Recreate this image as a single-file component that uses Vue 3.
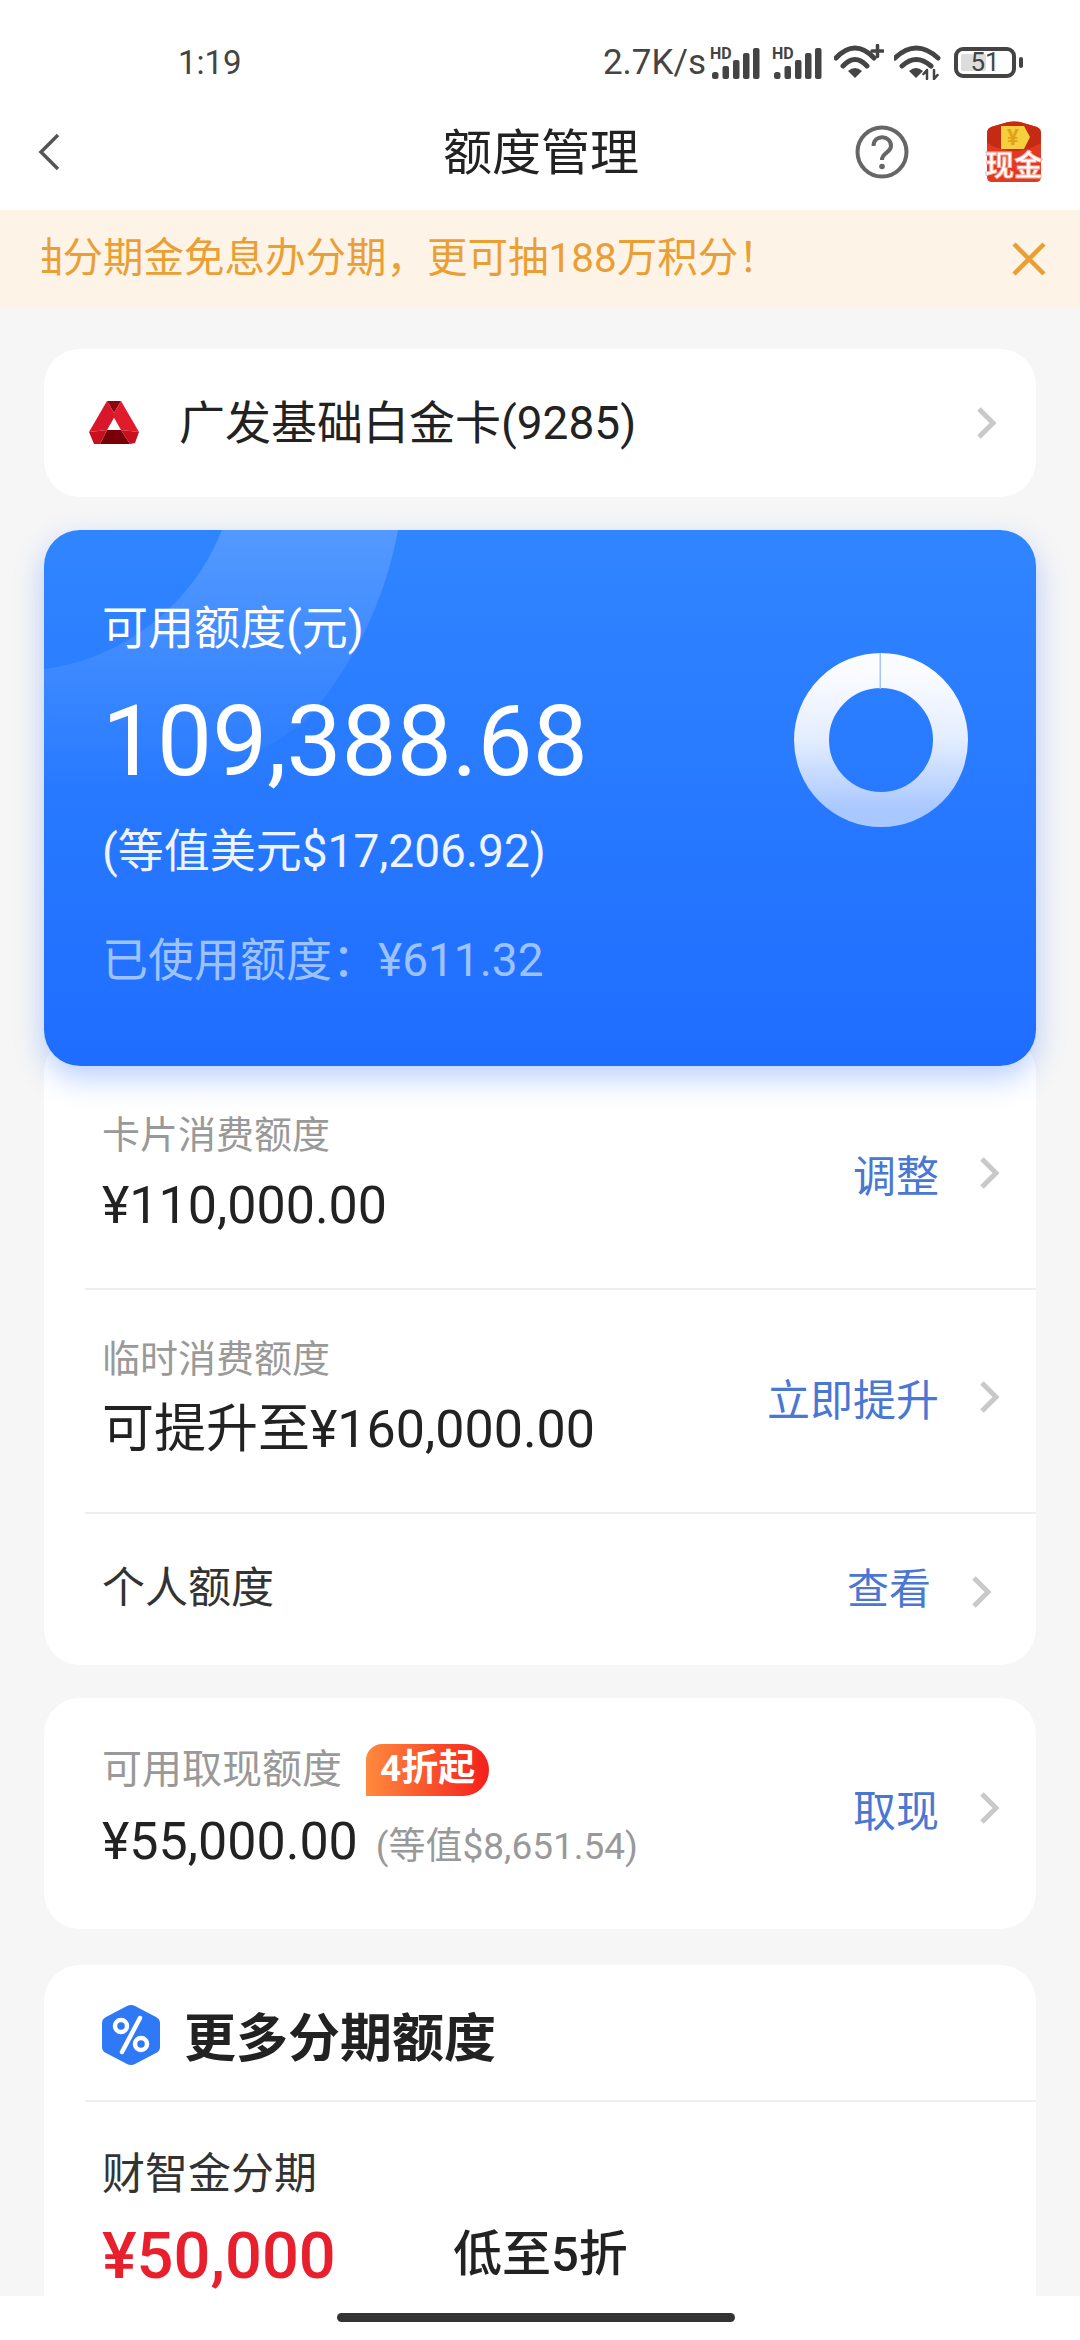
<template>
  <div class="page">
    <div class="status">
      <span class="time">1:19</span>
      <div class="status-right">
        <span class="speed">2.7K/s</span>
        <svg v-for="n in 2" :key="n" class="signal" width="50" height="38" viewBox="0 0 50 38">
          <text x="0" y="16" class="hd">HD</text>
          <rect x="2" y="29" width="6.5" height="7" rx="2.5" />
          <rect x="12.5" y="23" width="6.5" height="13" rx="2" />
          <rect x="23" y="17" width="6.5" height="19" rx="2" />
          <rect x="33" y="10" width="6.5" height="26" rx="2" />
          <rect x="43" y="5" width="6.5" height="31" rx="2" />
        </svg>
        <svg class="wifi" width="50" height="36" viewBox="0 0 50 36">
          <path d="M2 14 Q21 -6 40 14 M9 22 Q21 9 33 22" />
          <path class="wedge" d="M14 27 Q21 21 28 27 L21 34 Z" />
          <path d="M38 7 H49 M43.5 1.5 V12.5" class="plus" />
        </svg>
        <svg class="wifi" width="48" height="36" viewBox="0 0 48 36">
          <path d="M1 14 Q22 -6 44 14 M8 22 Q22 9 37 22" />
          <path class="wedge" d="M15 27 Q22 21 29 27 L22 34 Z" />
          <path class="plus thin" d="M33 35 V26 M29.500 30 L33 26 M40 26 V35 M43.500 31 L40 35" />
        </svg>
        <div class="battery">
          <div class="battery-fill"></div>
          <span>51</span>
        </div>
        <div class="battery-nub"></div>
      </div>
    </div>

    <div class="nav">
      <div class="nav-side">
        <svg class="back" width="22" height="38" viewBox="0 0 22 38">
          <path d="M20 2 L3 19 L20 36" />
        </svg>
      </div>
      <div class="nav-title">额度管理</div>
      <div class="nav-side nav-side-right">
        <svg class="help" width="54" height="54" viewBox="0 0 54 54">
          <circle cx="27" cy="27" r="24.500" />
          <path d="M18.500 21 C18.500 9 36 9.500 36 21 C36 28 27 27.500 27 35" />
          <circle class="dot" cx="27" cy="41.500" r="2.800" />
        </svg>
        <svg class="packet" width="60" height="62" viewBox="0 0 60 62">
          <path d="M3 12 Q3 8 7 6 L24 1 Q30 0 36 1 L53 6 Q57 8 57 12 V56 Q57 61 52 61 H8 Q3 61 3 56 Z" fill="#e23a22" />
          <path d="M3 12 Q3 8 7 6 L24 1 Q30 0 36 1 L53 6 Q57 8 57 12 V22 Q30 38 3 22 Z" fill="#c42a14" />
          <path d="M17 5 H40 L46 16 L40 28 H17 Z" fill="#f6cf3c" />
          <text x="29" y="24" class="yen">¥</text>
          <text x="30" y="55" class="cash">现金</text>
        </svg>
      </div>
    </div>

    <div class="notice">
      <div class="notice-text"><span>抽分期金免息办分期，更可抽188万积分！</span></div>
      <svg class="notice-close" width="36" height="36" viewBox="0 0 36 36">
        <path d="M3 3 L33 33 M33 3 L3 33" />
      </svg>
    </div>

    <div class="main">
      <div class="card card-name">
        <svg class="bank" width="50" height="44" viewBox="0 0 50 44">
          <polygon points="18,0 32,0 25,12" fill="#8a0710" />
          <polygon points="18,0 25,12 25,17 18,29 0,31" fill="#d8182a" />
          <polygon points="32,0 50,31 32,29 25,17 25,12" fill="#e01c2c" />
          <polygon points="18,29 32,29 41,43 11,43" fill="#7a0008" />
          <polygon points="0,31 18,29 11,43 5,43" fill="#c9101f" />
          <polygon points="50,31 32,29 41,43 46,42" fill="#c9101f" />
          <polygon points="25,17 19,28.500 31,28.500" fill="#fff" />
        </svg>
        <span class="bank-name">广发基础白金卡(9285)</span>
        <svg class="chevron" width="22" height="34" viewBox="0 0 22 34"><path d="M4 3 L18 17 L4 31" /></svg>
      </div>

      <div class="quota">
        <svg class="quota-arc" width="420" height="260" viewBox="0 0 420 260">
          <defs>
            <linearGradient id="arcFade" x1="0" y1="0" x2="0" y2="1">
              <stop offset="0" stop-color="#fff" stop-opacity="0.17" />
              <stop offset="1" stop-color="#fff" stop-opacity="0" />
            </linearGradient>
          </defs>
          <path fill="url(#arcFade)" fill-rule="evenodd" d="M354 0 A395 395 0 0 1 262 190 Q200 240 110 258 L0 258 L0 139 A222 222 0 0 0 178 0 Z" />
        </svg>
        <div class="quota-text">
          <div class="quota-label">可用额度(元)</div>
          <div class="quota-num">109,388.68</div>
          <div class="quota-usd">(等值美元$17,206.92)</div>
          <div class="quota-used">已使用额度：¥611.32</div>
        </div>
        <svg class="donut" width="176" height="176" viewBox="0 0 176 176">
          <defs>
            <linearGradient id="ring" x1="0" y1="0" x2="0" y2="1">
              <stop offset="0" stop-color="#fbfcff" />
              <stop offset="0.5" stop-color="#e3edff" />
              <stop offset="1" stop-color="#a9c8ff" />
            </linearGradient>
          </defs>
          <circle cx="88" cy="88" r="69.500" fill="none" stroke="url(#ring)" stroke-width="35" />
          <rect x="86.500" y="1" width="1.500" height="36" fill="#a5c6f8" />
        </svg>
      </div>

      <div class="card limits">
        <div v-for="row in rows" :key="row.label" class="row">
          <div class="row-left">
            <div class="row-label">{{ row.label }}</div>
            <div class="row-value">{{ row.value }}</div>
          </div>
          <span class="action">{{ row.action }}</span>
          <svg class="chevron" width="22" height="34" viewBox="0 0 22 34"><path d="M4 3 L18 17 L4 31" /></svg>
        </div>
        <div class="row row-plain">
          <div class="row-left plain-label">个人额度</div>
          <span class="action action-small">查看</span>
          <svg class="chevron" width="22" height="34" viewBox="0 0 22 34"><path d="M4 3 L18 17 L4 31" /></svg>
        </div>
      </div>

      <div class="card cash-card">
        <div class="row-left">
          <div class="cash-top">
            <span class="row-label cash-label">可用取现额度</span>
            <span class="badge">4折起</span>
          </div>
          <div class="cash-value">
            <span class="row-value">¥55,000.00</span>
            <span class="cash-usd">(等值$8,651.54)</span>
          </div>
        </div>
        <span class="action">取现</span>
        <svg class="chevron" width="22" height="34" viewBox="0 0 22 34"><path d="M4 3 L18 17 L4 31" /></svg>
      </div>

      <div class="card more">
        <div class="more-head">
          <svg width="58" height="62" viewBox="0 0 58 62">
            <path d="M25 2 Q29 0 33 2 L54 13 Q58 15 58 19 V43 Q58 47 54 49 L33 60 Q29 62 25 60 L4 49 Q0 47 0 43 V19 Q0 15 4 13 Z" fill="#2f78f6" />
            <circle cx="19" cy="22" r="6" class="pct" />
            <circle cx="39" cy="40" r="6" class="pct" />
            <path d="M38 14 L20 48" class="pct" />
          </svg>
          <span class="more-title">更多分期额度</span>
        </div>
        <div class="more-body">
          <div class="more-name">财智金分期</div>
          <div class="more-line">
            <span class="more-amount">¥50,000</span>
            <span class="more-rate">低至5折</span>
          </div>
        </div>
      </div>
    </div>

    <div class="home"><div class="home-bar"></div></div>
  </div>
</template>

<script setup>
const rows = [
  { label: '卡片消费额度', value: '¥110,000.00', action: '调整' },
  { label: '临时消费额度', value: '可提升至¥160,000.00', action: '立即提升' }
]
</script>

<style>
html,
body {
  margin: 0;
  background: #f6f6f6;
}
</style>

<style scoped>
* {
  box-sizing: border-box;
}

.page {
  width: 1080px;
  height: 2340px;
  display: flex;
  flex-direction: column;
  overflow: hidden;
  background: #f6f6f6;
  color: #222;
  font-family: Roboto, "Noto Sans CJK SC", sans-serif;
}

.status {
  height: 100px;
  flex: none;
  background: #fff;
  display: flex;
  align-items: center;
  justify-content: space-between;
  padding: 24px 57px 0 178px;
  color: #444;
}

.time {
  font-size: 33px;
}

.status-right {
  display: flex;
  align-items: center;
}

.speed {
  font-size: 35px;
  margin-right: 4px;
}

.signal {
  margin-right: 12px;
  fill: #444;
}

.hd {
  font-family: Roboto, sans-serif;
  font-size: 16px;
  font-weight: 700;
}

.wifi {
  margin-right: 10px;
}

.wifi path {
  fill: none;
  stroke: #444;
  stroke-width: 5;
  stroke-linecap: round;
}

.wifi .wedge {
  fill: #444;
  stroke: none;
}

.wifi .plus {
  stroke-width: 3.500;
}

.wifi .thin {
  stroke-width: 2.500;
}

.battery {
  position: relative;
  width: 62px;
  height: 31px;
  margin-left: 2px;
  border: 4px solid #444;
  border-radius: 9px;
  text-align: center;
  font-size: 26px;
  line-height: 23px;
}

.battery-fill {
  position: absolute;
  left: 3px;
  top: 3px;
  bottom: 3px;
  width: 25px;
  background: #ddd;
  border-radius: 2px;
}

.battery span {
  position: relative;
}

.battery-nub {
  width: 4px;
  height: 11px;
  margin-left: 3px;
  background: #444;
  border-radius: 2px;
}

.nav {
  height: 110px;
  flex: none;
  background: #fff;
  display: flex;
  align-items: center;
  padding: 0 36px 6px 38px;
}

.nav-side {
  flex: 1;
  display: flex;
  align-items: center;
}

.nav-side-right {
  justify-content: flex-end;
}

.back path {
  fill: none;
  stroke: #555;
  stroke-width: 3.500;
}

.nav-title {
  padding-bottom: 8px;
  font-size: 49px;
  color: #222;
}

.help {
  margin-right: 75px;
}

.help circle {
  fill: none;
  stroke: #666;
  stroke-width: 4;
}

.help path {
  fill: none;
  stroke: #666;
  stroke-width: 4;
}

.help .dot {
  fill: #666;
  stroke: none;
}

.yen {
  font-size: 22px;
  font-weight: 700;
  fill: #e0a11b;
  text-anchor: middle;
}

.cash {
  font-size: 29px;
  font-weight: 700;
  fill: #fff;
  stroke: #f7a79a;
  stroke-width: 0.800;
  text-anchor: middle;
}

.notice {
  height: 97px;
  flex: none;
  background: #fdf3e6;
  display: flex;
  align-items: center;
  padding: 0 33px 0 42px;
  color: #ea9f35;
}

.notice-text {
  flex: 1;
  overflow: hidden;
  white-space: nowrap;
  padding-bottom: 8px;
  font-size: 40.5px;
}

.notice-text span {
  margin-left: -20px;
}

.notice-close path {
  fill: none;
  stroke: #ea9f35;
  stroke-width: 4.500;
}

.main {
  flex: 1;
  min-height: 0;
  overflow: hidden;
  padding: 42px 44px 0;
}

.card {
  background: #fff;
  border-radius: 36px;
}

.card-name {
  height: 148px;
  display: flex;
  align-items: center;
  padding: 0 39px 0 45px;
}

.bank-name {
  flex: 1;
  margin-left: 40px;
  padding-bottom: 9px;
  font-size: 46px;
  color: #222;
}

.chevron {
  flex: none;
}

.chevron path {
  fill: none;
  stroke: #c9c9c9;
  stroke-width: 5;
}

.quota {
  position: relative;
  z-index: 1;
  height: 536px;
  margin-top: 33px;
  border-radius: 36px;
  overflow: hidden;
  display: flex;
  justify-content: space-between;
  align-items: flex-start;
  padding: 68px 67px 0 58px;
  color: #fff;
  background: linear-gradient(180deg, #3085ff 0%, #1f6dff 100%);
  box-shadow: 0 12px 30px rgba(40, 110, 255, 0.32);
}

.quota-arc {
  position: absolute;
  left: 0;
  top: 0;
}

.quota-text {
  position: relative;
}

.quota-label {
  font-size: 46px;
  line-height: 60px;
}

.quota-num {
  margin-top: 29px;
  font-size: 98px;
  line-height: 110px;
}

.quota-usd {
  margin-top: 24px;
  font-size: 46px;
  line-height: 60px;
  color: #eef4ff;
}

.quota-used {
  margin-top: 49px;
  font-size: 46px;
  line-height: 60px;
  color: #9cc2ff;
}

.donut {
  position: relative;
  margin-top: 54px;
}

.limits {
  margin-top: -30px;
  padding: 30px 0 0 41px;
}

.row {
  height: 224px;
  display: flex;
  align-items: center;
  padding: 0 36px 8px 17px;
  border-bottom: 2px solid #eee;
}

.row-plain {
  height: 151px;
  border-bottom: none;
  padding: 4px 44px 0 17px;
}

.row-left {
  flex: 1;
}

.row-label {
  font-size: 38px;
  line-height: 50px;
  color: #999;
}

.row-value {
  margin-top: 16px;
  font-size: 52px;
  line-height: 60px;
  color: #222;
}

.plain-label {
  padding-bottom: 16px;
  font-size: 43px;
  color: #333;
}

.action {
  margin-right: 39px;
  font-size: 43px;
  color: #4a77d2;
}

.action-small {
  padding-bottom: 12px;
  font-size: 42px;
}

.cash-card {
  height: 231px;
  margin-top: 33px;
  display: flex;
  align-items: center;
  padding: 0 36px 12px 58px;
}

.cash-top {
  display: flex;
  align-items: center;
}

.cash-label {
  font-size: 40px;
}

.badge {
  height: 52px;
  margin-left: 24px;
  padding: 0 14px;
  border-radius: 16px 26px 26px 0;
  background: linear-gradient(90deg, #ff8a3d 0%, #f51f1c 100%);
  color: #fff;
  font-size: 37px;
  font-weight: 700;
  line-height: 50px;
}

.cash-value {
  display: flex;
  align-items: baseline;
  margin-top: 16px;
}

.cash-value .row-value {
  margin-top: 0;
}

.cash-usd {
  margin-left: 18px;
  font-size: 37px;
  color: #999;
}

.more {
  height: 400px;
  margin-top: 36px;
  border-radius: 36px 36px 0 0;
  padding-left: 41px;
}

.more-head {
  height: 137px;
  display: flex;
  align-items: center;
  padding: 4px 0 0 17px;
  border-bottom: 2px solid #eee;
}

.pct {
  fill: none;
  stroke: #fff;
  stroke-width: 4.500;
  stroke-linecap: round;
}

.more-title {
  margin-left: 24px;
  font-size: 52px;
  font-weight: 700;
  color: #222;
}

.more-body {
  padding: 42px 0 0 17px;
}

.more-name {
  font-size: 43px;
  line-height: 60px;
  color: #333;
}

.more-line {
  display: flex;
  align-items: center;
  margin-top: 10px;
}

.more-amount {
  width: 351px;
  font-size: 65px;
  font-weight: 500;
  line-height: 80px;
  color: #e8202e;
}

.more-rate {
  padding-bottom: 12px;
  font-size: 49px;
  font-weight: 500;
  color: #222;
}

.home {
  height: 44px;
  flex: none;
  background: #fff;
  display: flex;
  justify-content: center;
  padding: 17px 8px 0 0;
}

.home-bar {
  width: 398px;
  height: 9px;
  border-radius: 5px;
  background: #333;
}
</style>
